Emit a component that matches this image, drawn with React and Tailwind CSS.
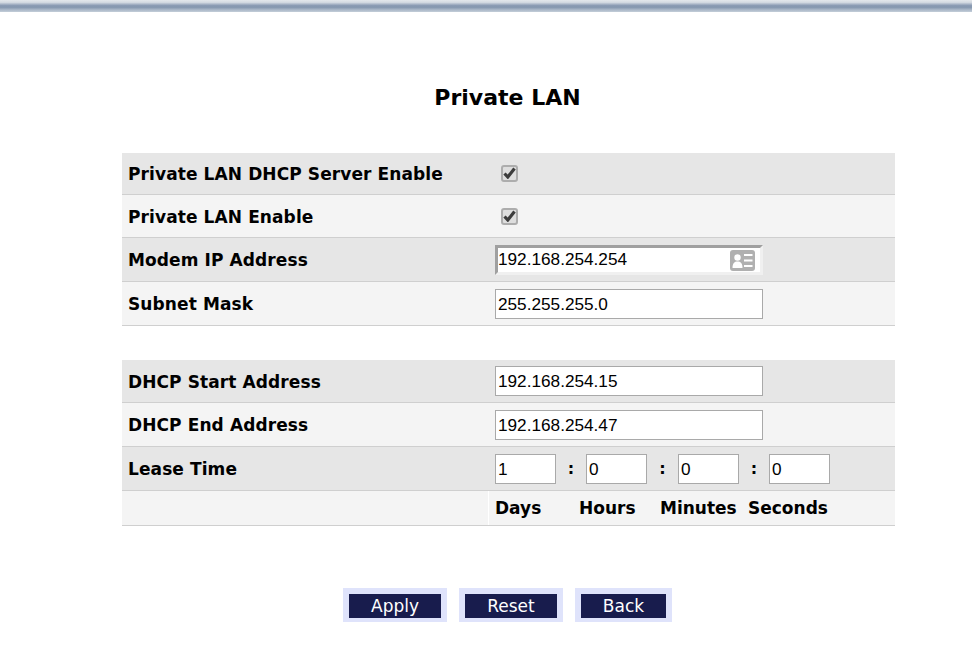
const labelFont = "font-['DejaVu_Sans',Verdana,sans-serif]"

function CheckBox() {
  return (
    <span className="flex h-[17px] w-[17px] items-center justify-center rounded-[3px] border-2 border-[#adadad] bg-[#dedede]">
      <svg width="13" height="12" viewBox="0 0 13 12">
        <path d="M1.5 6.5 L4.8 10 L11.5 1.5" fill="none" stroke="#3c3c3c" strokeWidth="3.2" />
      </svg>
    </span>
  )
}

function TextInput({ value, className = 'w-[268px]' }) {
  return (
    <input
      readOnly
      value={value}
      className={`h-[30px] border border-[#a9a9a9] bg-white pt-[1px] pl-[2px] font-['Liberation_Sans',Arial,sans-serif] text-[17.2px] text-black outline-none ${className}`}
    />
  )
}

function ContactIcon() {
  return (
    <svg width="25" height="21" viewBox="0 0 25 21" className="shrink-0">
      <rect width="25" height="21" rx="3" fill="#b0b0b0" />
      <circle cx="7.5" cy="7.5" r="3.2" fill="#fff" />
      <path d="M2.5 18 C2.5 13 4.5 11.5 7.5 11.5 C10.5 11.5 12.5 13 12.5 18 Z" fill="#fff" />
      <rect x="14" y="4" width="8.5" height="2" fill="#fff" />
      <rect x="14" y="9.5" width="8.5" height="2" fill="#fff" />
      <rect x="14" y="15" width="8.5" height="2" fill="#fff" />
    </svg>
  )
}

function Row({ label, tone, height, children }) {
  return (
    <div className={`flex items-center border-b border-[#cfcfcf] ${height} ${tone === 'dark' ? 'bg-[#e6e6e6]' : 'bg-[#f4f4f4]'}`}>
      <div className={`w-[373px] shrink-0 pt-[3px] pl-[6px] text-[17px] font-bold tracking-[0.1px] text-black ${labelFont}`}>{label}</div>
      {children}
    </div>
  )
}

function Colon({ width = 'w-[30px]' }) {
  return <span className={`text-center text-[16px] font-bold text-black ${width} ${labelFont}`}>:</span>
}

function ActionButton({ label, width }) {
  return (
    <button type="button" className="bg-[#dfe3fb] px-[6px] pt-[6px] pb-[4px]">
      <span className={`flex h-[24px] items-center justify-center bg-[#181c4d] pt-[2px] text-[17px] text-white ${width} ${labelFont}`}>{label}</span>
    </button>
  )
}

export default function App() {
  return (
    <div className="h-[662px] w-[972px] overflow-hidden bg-white">
      <div className="h-[12px] bg-[linear-gradient(to_bottom,#e4e7eb_0%,#d4dae2_20%,#8c9cb4_45%,#8496ae_60%,#a8b5c6_80%,#c4ced9_100%)]" />

      <h1 className={`mt-[73px] ml-[122px] w-[773px] pr-[2px] text-center text-[22px] leading-[26px] font-bold text-black ${labelFont}`}>Private LAN</h1>

      <div className="mt-[42px] ml-[122px] w-[773px]">
        <Row label="Private LAN DHCP Server Enable" tone="dark" height="h-[42px]">
          <div className="mb-[1px] ml-[6px]"><CheckBox /></div>
        </Row>
        <Row label="Private LAN Enable" height="h-[43px]">
          <div className="ml-[6px]"><CheckBox /></div>
        </Row>
        <Row label="Modem IP Address" tone="dark" height="h-[44px]">
          <div className="flex h-[30px] w-[268px] items-center justify-between border-[3px] border-t-[#a0a0a0] border-r-[#f0f0f0] border-b-[#f0f0f0] border-l-[#a0a0a0] bg-white pt-[1px] pr-[5px] font-['Liberation_Sans',Arial,sans-serif] text-[17.2px] text-black">
            <span>192.168.254.254</span>
            <ContactIcon />
          </div>
        </Row>
        <Row label="Subnet Mask" height="h-[44px]">
          <TextInput value="255.255.255.0" />
        </Row>
      </div>

      <div className="mt-[34px] ml-[122px] w-[773px]">
        <Row label="DHCP Start Address" tone="dark" height="h-[43px]">
          <TextInput value="192.168.254.15" />
        </Row>
        <Row label="DHCP End Address" height="h-[44px]">
          <TextInput value="192.168.254.47" />
        </Row>
        <Row label="Lease Time" tone="dark" height="h-[44px]">
          <TextInput value="1" className="w-[61px]" />
          <Colon />
          <TextInput value="0" className="w-[61px]" />
          <Colon width="w-[31px]" />
          <TextInput value="0" className="w-[61px]" />
          <Colon />
          <TextInput value="0" className="w-[61px]" />
        </Row>
        <div className={`flex h-[35px] items-center border-b border-[#cfcfcf] bg-[#f4f4f4] text-[17px] font-bold text-black ${labelFont}`}>
          <div className="h-full w-[367px] shrink-0 border-r border-white" />
          <span className="ml-[6px] w-[84px] pt-[1px]">Days</span>
          <span className="w-[81px] pt-[1px]">Hours</span>
          <span className="w-[88px] pt-[1px]">Minutes</span>
          <span className="pt-[1px]">Seconds</span>
        </div>
      </div>

      <div className="mt-[62px] ml-[343px] flex gap-[12px]">
        <ActionButton label="Apply" width="w-[92px]" />
        <ActionButton label="Reset" width="w-[92px]" />
        <ActionButton label="Back" width="w-[85px]" />
      </div>
    </div>
  )
}
